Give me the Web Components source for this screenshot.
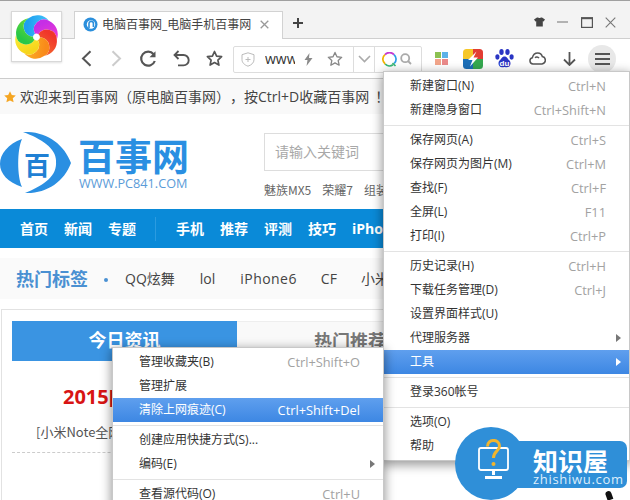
<!DOCTYPE html>
<html lang="zh-CN"><head><meta charset="utf-8"><title>百事网</title>
<style>
html,body{margin:0;padding:0;background:#fff}
body{width:630px;height:500px;overflow:hidden;position:relative;font-family:"Open Sans","Noto Sans CJK SC",sans-serif;color:#333;text-spacing-trim:space-all}
context-menu.main{position:absolute;left:383px;top:71px;width:247px;z-index:5}
context-menu.sub{position:absolute;left:112px;top:347px;width:272px;z-index:6}
app-logo{position:absolute;left:11px;top:11px;z-index:3}
water-mark{position:absolute;left:455px;top:427px;z-index:8}
</style></head><body>
<tab-strip></tab-strip>
<tool-bar></tool-bar>
<book-marks></book-marks>
<site-header></site-header>
<site-nav></site-nav>
<hot-tags></hot-tags>
<news-panel></news-panel>
<app-logo></app-logo>
<context-menu class="main">
<menu-item label="新建窗口(N)" key="Ctrl+N"></menu-item>
<menu-item label="新建隐身窗口" key="Ctrl+Shift+N"></menu-item>
<menu-sep></menu-sep>
<menu-item label="保存网页(A)" key="Ctrl+S"></menu-item>
<menu-item label="保存网页为图片(M)" key="Ctrl+M"></menu-item>
<menu-item label="查找(F)" key="Ctrl+F"></menu-item>
<menu-item label="全屏(L)" key="F11"></menu-item>
<menu-item label="打印(I)" key="Ctrl+P"></menu-item>
<menu-sep></menu-sep>
<menu-item label="历史记录(H)" key="Ctrl+H"></menu-item>
<menu-item label="下载任务管理(D)" key="Ctrl+J"></menu-item>
<menu-item label="设置界面样式(U)"></menu-item>
<menu-item label="代理服务器" arrow></menu-item>
<menu-item label="工具" arrow active></menu-item>
<menu-sep></menu-sep>
<menu-item label="登录360帐号"></menu-item>
<menu-sep></menu-sep>
<menu-item label="选项(O)"></menu-item>
<menu-item label="帮助"></menu-item>
</context-menu>
<context-menu class="sub">
<menu-item label="管理收藏夹(B)" key="Ctrl+Shift+O"></menu-item>
<menu-item label="管理扩展"></menu-item>
<menu-item label="清除上网痕迹(C)" key="Ctrl+Shift+Del" active></menu-item>
<menu-sep></menu-sep>
<menu-item label="创建应用快捷方式(S)..."></menu-item>
<menu-item label="编码(E)" arrow></menu-item>
<menu-sep></menu-sep>
<menu-item label="查看源代码(O)" key="Ctrl+U"></menu-item>
</context-menu>
<water-mark></water-mark>
<script>
function def(name,html){
  customElements.define(name,class extends HTMLElement{
    constructor(){super();this.attachShadow({mode:'open'});}
    connectedCallback(){this.shadowRoot.innerHTML=typeof html==='function'?html(this):html;}
  });
}
def('tab-strip',`<style>
:host{display:flex;height:38px;box-sizing:border-box;background:#f3f3f3;border-top:1px solid #a0a0a0;padding:10px 0 0 74px;position:relative;align-items:flex-start}
:host::after{content:"";position:absolute;left:0;right:0;bottom:-1px;height:1px;background:#cfcfcf}
.tab{width:209px;height:28px;box-sizing:border-box;background:#fff;border:1px solid #d2d2d2;border-bottom:0;display:flex;align-items:center;padding:0 0 2px 8px;position:relative;z-index:1;font-size:12px;color:#444;line-height:16px}
.t{margin-left:4px;white-space:nowrap;width:150px}
.x{margin-left:8px;display:flex}
.plus{margin:6px 0 0 9px;display:flex}
.ctl{margin-left:auto;display:flex;align-items:center;padding:0 14px 0 0;height:22px}
</style>
<div class="tab">
<svg width="15" height="15" viewBox="0 0 15 15"><circle cx="7.5" cy="7.5" r="7" fill="#2b8fdc"/><circle cx="8" cy="7.5" r="4.2" fill="#fff"/><path d="M6 11V6.6a2.2 2.2 0 0 1 4.4 0V10" fill="none" stroke="#2b8fdc" stroke-width="1.6"/></svg>
<span class="t">电脑百事网_电脑手机百事网</span>
<span class="x"><svg width="9" height="9" viewBox="0 0 9 9"><path d="M.7.7l7.6 7.6M8.300.7L.7 8.300" stroke="#999" stroke-width="1.300"/></svg></span>
</div>
<span class="plus"><svg width="12" height="12" viewBox="0 0 12 12"><path d="M6 1v10M1 6h10" stroke="#444" stroke-width="2"/></svg></span>
<span class="ctl">
<svg width="11" height="10" viewBox="0 0 11 10" style="margin-right:12px"><path d="M3 .5h1.300c.3.8 2.100.8 2.400 0H8L11 2.500 9.600 4.600 8.800 4.200V9.500H2.200V4.200L1.400 4.600 0 2.500z" fill="#444"/></svg>
<svg width="11" height="2" viewBox="0 0 11 2" style="margin-right:13px"><path d="M0 1h11" stroke="#888" stroke-width="1.200"/></svg>
<svg width="12" height="11" viewBox="0 0 12 11" style="margin-right:12px"><rect x=".6" y="1" width="10.800" height="9.400" fill="none" stroke="#555" stroke-width="1.200"/><path d="M0 1.200h12" stroke="#555" stroke-width="2"/></svg>
<svg width="11" height="11" viewBox="0 0 11 11"><path d="M.7.7l9.600 9.600M10.300.7L.7 10.300" stroke="#777" stroke-width="1.100"/></svg>
</span>`);

def('tool-bar',`<style>
:host{display:flex;height:40px;box-sizing:border-box;background:#fff;border-bottom:1px solid #ccc;margin-top:1px;padding-left:71px;align-items:center}
.s{display:flex;align-items:center;justify-content:center;flex:none;height:30px}
.addr{width:189px;height:27px;box-sizing:border-box;border:1px solid #ddd;border-radius:2px;margin:1px 0 0 2px;display:flex;align-items:center;font-size:14px;color:#333;flex:none}
.www{width:30px;margin-left:3px;overflow:hidden;white-space:nowrap;line-height:20px;flex:none}
.d{width:1px;height:25px;background:#ddd;flex:none}
.h{width:28px;height:28px;border-radius:50%;background:#e8e8e8}
</style>
<span class="s" style="width:30px"><svg width="11" height="17" viewBox="0 0 11 17"><path d="M9.500 1.200L2 8.500l7.500 7.300" fill="none" stroke="#555" stroke-width="2"/></svg></span>
<span class="s" style="width:30px"><svg width="11" height="17" viewBox="0 0 11 17"><path d="M1.500 1.200L9 8.500l-7.500 7.300" fill="none" stroke="#ccc" stroke-width="2"/></svg></span>
<span class="s" style="width:34px"><svg width="18" height="18" viewBox="0 0 18 18"><path d="M14.600 4.200A7 7 0 1 0 15.800 11" fill="none" stroke="#555" stroke-width="2.200"/><path d="M16.500 1.200V7.200H10.500z" fill="#555"/></svg></span>
<span class="s" style="width:32px"><svg width="17" height="17" viewBox="0 0 17 17"><path d="M5.500 1L1.500 5l4 4" fill="none" stroke="#555" stroke-width="1.800"/><path d="M2 5h8.500a5 5 0 0 1 0 10.400H5" fill="none" stroke="#555" stroke-width="1.900"/></svg></span>
<span class="s" style="width:34px"><svg width="17" height="17" viewBox="0 0 17 17"><path d="M8.500 1.500l2.100 4.600 5 .6-3.700 3.400 1 5-4.400-2.500-4.400 2.500 1-5L1.400 6.700l5-.6z" fill="none" stroke="#555" stroke-width="1.700" stroke-linejoin="round"/></svg></span>
<div class="addr">
<span class="s" style="width:28px"><svg width="14" height="15" viewBox="0 0 14 15"><path d="M7 .8l6 1.900v5c0 3-2.500 5.300-6 6.500C3.500 13 1 10.700 1 7.700v-5z" fill="none" stroke="#bbb" stroke-width="1"/><path d="M7 5v5M4.500 7.500h5" stroke="#bbb" stroke-width="1"/></svg></span>
<span class="www">www.pc841.com</span>
<span class="s" style="width:26px"><svg width="9" height="13" viewBox="0 0 9 13"><path d="M5.500 0L.5 7h3L2.500 13l6-8H5z" fill="#8a8a8a"/></svg></span>
<span class="s" style="width:28px"><svg width="16" height="16" viewBox="0 0 17 17"><path d="M8.500 1.500l2.100 4.600 5 .6-3.700 3.400 1 5-4.400-2.500-4.400 2.500 1-5L1.400 6.700l5-.6z" fill="none" stroke="#888" stroke-width="1.400" stroke-linejoin="round"/></svg></span>
<span class="d" style="margin-left:4px"></span>
<span class="s" style="width:20px"><svg width="13" height="8" viewBox="0 0 13 8"><path d="M1 1l5.500 5.500L12 1" fill="none" stroke="#aaa" stroke-width="1.600"/></svg></span>
<span class="d"></span>
<span class="s" style="width:27px;margin-left:1px"><svg width="15" height="15" viewBox="0 0 15 15" fill="none" stroke-width="1.700"><path d="M3 2.600A6 6 0 0 1 12 2.600" stroke="#c43ad0"/><path d="M3 2.600A6 6 0 0 0 3.200 12" stroke="#f0b400"/><path d="M3.200 12A6 6 0 0 0 11 12.800" stroke="#3cb878"/><path d="M12 2.600A6 6 0 0 1 12.200 11.500" stroke="#2b9ce8"/><path d="M10.500 11l3 3" stroke="#3cb878"/></svg></span>
<span class="s" style="width:12px;margin-left:-3px"><svg width="12" height="12" viewBox="0 0 12 12" fill="none" stroke="#aaa" stroke-width="1.800"><circle cx="5.200" cy="5.200" r="4"/><path d="M8 8l3 3"/></svg></span>
</div>
<span class="s" style="width:39px"><svg width="13" height="13" viewBox="0 0 13 13"><rect width="6" height="6" fill="#8cc152"/><rect x="7" width="6" height="6" fill="#5db2e8"/><rect y="7" width="6" height="6" fill="#f2a58a"/><rect x="7" y="7" width="6" height="6" fill="#ea8a8a"/></svg></span>
<span class="s" style="width:23px"><svg width="20" height="20" viewBox="0 0 20 20"><defs><clipPath id="q"><rect width="20" height="20" rx="3.500"/></clipPath></defs><g clip-path="url(#q)"><rect width="10" height="10" fill="#f6c728"/><rect x="10" width="10" height="10" fill="#e23d32"/><rect y="10" width="10" height="10" fill="#1d6fb8"/><rect x="10" y="10" width="10" height="10" fill="#35a84f"/></g><path d="M13.500 2.500L5 11h4.500L7 17.500l8-9h-4.500z" fill="#fff"/></svg></span>
<span class="s" style="width:40px"><svg width="19" height="20" viewBox="0 0 19 20"><ellipse cx="2.400" cy="8" rx="2.100" ry="2.700" fill="#2a35c4"/><ellipse cx="6.500" cy="3" rx="2.200" ry="2.900" fill="#2a35c4"/><ellipse cx="12.500" cy="3" rx="2.200" ry="2.900" fill="#2a35c4"/><ellipse cx="16.600" cy="8" rx="2.100" ry="2.700" fill="#2a35c4"/><path d="M9.500 7.500c2.500 0 3 2.500 5 4 2 1.800 1 6.800-2.500 6.800-1 0-1.500-.3-2.500-.3s-1.500.3-2.500.3C3.500 18.300 2.500 13.300 4.500 11.500c2-1.500 2.500-4 5-4z" fill="#2a35c4"/><text x="9.500" y="16.600" text-anchor="middle" font-size="8" font-weight="700" fill="#fff" font-family="Liberation Sans,sans-serif">du</text></svg></span>
<span class="s" style="width:26px"><svg width="17" height="13" viewBox="0 0 17 13"><path d="M4 12a3.200 3.200 0 0 1-.6-6.300C4 3 6.300 1 8.800 1c2.200 0 3.900 1.400 4.500 3.500A3.800 3.800 0 0 1 13 12zM6 5.700c1-1 3-.9 4 .4" fill="none" stroke="#555" stroke-width="1.500"/></svg></span>
<span class="s" style="width:38px"><svg width="13" height="14" viewBox="0 0 13 14"><path d="M6.500 0v12.500M1 7.500l5.500 5.500L12 7.500" fill="none" stroke="#555" stroke-width="1.800"/></svg></span>
<span class="s h"><svg width="15" height="12" viewBox="0 0 15 12"><path d="M0 1h15M0 6h15M0 11h15" stroke="#555" stroke-width="2"/></svg></span>`);

def('book-marks',`<style>
:host{display:flex;height:35px;box-sizing:border-box;background:#f9f9f9;align-items:center;padding:0 0 0 4px;font-size:14px;color:#444;white-space:nowrap;line-height:20px;overflow:hidden}
span{margin-left:4px}
em{font-style:normal;margin-left:6px}
</style><svg width="12" height="12" viewBox="0 0 12 12"><path d="M6 .3l1.800 3.700 4 .5-3 2.800.8 4L6 9.400 2.400 11.300l.8-4-3-2.800 4-.5z" fill="#f5a623"/></svg><span>欢迎来到百事网（原电脑百事网），按Ctrl+D收藏百事网<em>！</em></span>`);

def('site-header',`<style>
:host{display:flex;height:95px;box-sizing:border-box;padding-top:18px;background:#fff;overflow:hidden}
.brand{margin:5px 0 0 6px;width:110px;flex:none}
.cn{font:700 37px/36px "Noto Sans CJK SC",sans-serif;color:#2a8fe2;height:36px;white-space:nowrap;width:110px}
.en{font-size:12.700px;line-height:16px;color:#5a9bd8;margin:2px 0 0 1px;white-space:nowrap}
.r{margin-left:76px;flex:none;width:300px;margin-top:1px}
.box{height:38px;box-sizing:border-box;border:1px solid #ddd;padding-left:10px;font-size:14px;line-height:36px;color:#a8a8a8}
.k{font:12px/16px "Noto Sans CJK SC",sans-serif;color:#666;margin-top:11px;white-space:nowrap}
.k span{margin-right:11px}
</style>
<svg width="72" height="62" viewBox="0 0 72 62" style="flex:none"><path d="M22 7C8 12 0 22 0 32C0 42 8 50 22 55C17 44 17 18 22 7z" fill="#2a8fe2"/><path d="M23 0C46-1 64 12 71 31C64 50 46 62 25 61C42 54 57 45 56 30C57 17 42 7 23 0z" fill="#2a8fe2"/><text x="37" y="43" text-anchor="middle" font-size="26" font-weight="700" fill="#1f80d4" font-family="Noto Sans CJK SC,sans-serif">百</text></svg>
<div class="brand"><div class="cn">百事网</div><div class="en">WWW.PC841.COM</div></div>
<div class="r"><div class="box">请输入关键词</div><div class="k"><span>魅族MX5</span><span>荣耀7</span><span>组装</span></div></div>`);

def('site-nav',`<style>
:host{display:flex;height:39px;background:#0a8ad8;align-items:center;color:#fff;font-weight:700;font-size:14px;line-height:20px;padding-left:20px;gap:16px;white-space:nowrap;overflow:hidden;margin-bottom:10px}
i{width:1px;height:24px;background:#2b9be0;margin:0 4px 0 3px;flex:none}
</style><span>首页</span><span>新闻</span><span>专题</span><i></i><span>手机</span><span>推荐</span><span>评测</span><span>技巧</span><span>iPhone</span>`);

def('hot-tags',`<style>
:host{display:flex;height:41px;background:#fafafa;align-items:center;padding-left:16px;gap:24px;font-size:14px;line-height:20px;color:#444;white-space:nowrap;overflow:hidden;margin-bottom:10px}
b{font-size:18px;color:#4a90d2;line-height:24px}
i{width:4px;height:4px;border-radius:50%;background:#4a90d2;margin:2px -7px 0 -8px;flex:none}
.l{margin-left:1px}.p{letter-spacing:.45px;margin-left:1px}
</style><b>热门标签</b><i></i><span>QQ炫舞</span><span class="l">lol</span><span class="p">iPhone6</span><span>CF</span><span>小米</span>`);

def('news-panel',`<style>
:host{display:block;height:191px;box-sizing:border-box;background:#fff;border-top:1px solid #e2e2e2;border-left:1px solid #e2e2e2;margin-left:1px;padding:11px 0 0 10px}
.tabs{display:flex;height:40px}
.a,.b{font-size:18px;font-weight:700;display:flex;align-items:center;justify-content:center;line-height:24px;padding-bottom:2px;box-sizing:border-box}
.a{width:225px;background:#3a94e2;color:#fff}
.b{width:226px;background:#f9f9f9;border-top:1px solid #eee;color:#777}
.h{margin:22px 0 0 51px;font-size:20px;font-weight:700;color:#d81414;line-height:28px}
.p{margin:12px 0 0 24px;font:13px/18px "Noto Sans CJK SC",sans-serif;color:#555}
.dash{margin-top:11px;border-top:1px dashed #ccc;width:380px}
</style><div class="tabs"><div class="a">今日资讯</div><div class="b">热门推荐</div></div>
<div class="h">2015[</div><div class="p">[小米Note全网</div><div class="dash"></div>`);

def('app-logo',()=>{
  const c=[['#1fa0f0','#45c4fa'],['#c62ee6','#f03bd0'],['#f0352a','#f56a2e'],['#f98a1a','#fbb324'],['#f6d51c','#f8ef3a'],['#27c748','#6fdc38']];
  const R=Math.PI/180,cx=25.5,cy=26,pt=(r,a)=>[(r*Math.cos(a*R)).toFixed(2),(r*Math.sin(a*R)).toFixed(2)];
  let s='',d='';
  c.forEach((k,i)=>{
    const a=-175+i*60;
    const p0=pt(3.5,a),q0=pt(20.5,a+62),q1=pt(20.5,a+122),p1=pt(3.5,a+60);
    d+=`<linearGradient id="g${i}" gradientUnits="userSpaceOnUse" x1="${q0[0]}" y1="${q0[1]}" x2="${q1[0]}" y2="${q1[1]}"><stop offset="0" stop-color="${k[0]}"/><stop offset="1" stop-color="${k[1]}"/></linearGradient>`;
    s+=`<path fill="url(#g${i})" d="M${p0} A10 10 0 0 1 ${q0} A15 15 0 0 1 ${q1} A10 10 0 0 0 ${p1} A3.500 3.500 0 0 0 ${p0}Z"/>`;
  });
  return `<style>:host{display:block;width:51px;height:51px;box-sizing:border-box;background:#fff;border:1px solid #d8d8d8;box-shadow:0 1px 2px rgba(0,0,0,.12)}svg{display:block}</style>
  <svg width="49" height="49" viewBox="1 1 49 49"><defs>${d}</defs><g transform="translate(${cx} ${cy})">${s}</g></svg>`;
});

def('context-menu',`<style>
:host{display:block;box-sizing:border-box;background:#fff;border:1px solid #c8c8c8;padding:2px 0;box-shadow:0 3px 10px 1px rgba(0,0,0,.4)}
</style><slot></slot>`);
def('menu-sep',`<style>:host{height:6px;display:flex;align-items:center}div{height:1px;background:#e3e3e3;width:100%}</style><div></div>`);
def('menu-item',el=>{
  const on=el.hasAttribute('active');
  return `<style>
:host{display:flex;height:24px;box-sizing:border-box;align-items:center;justify-content:space-between;padding:0 23px 0 26px;font-size:12px;line-height:16px;white-space:nowrap;position:relative;color:${on?'#fff':'#333'};${on?'background:linear-gradient(#5f9fee,#3d87e3);':''}}
.k{color:${on?'#fff':'#a2a2a2'};font-size:12.800px}
svg{position:absolute;right:8px;top:8px}
</style><span>${el.getAttribute('label')}</span>${el.hasAttribute('key')?`<span class="k">${el.getAttribute('key')}</span>`:''}${el.hasAttribute('arrow')?`<svg width="5" height="8" viewBox="0 0 5 8"><path d="M0 0l5 4-5 4z" fill="${on?'#fff':'#777'}"/></svg>`:''}`;
});
def('water-mark',`<style>
:host{display:block;width:175px;height:73px}
.c{position:absolute;left:0;top:0;width:72px;height:73px;border-radius:50%;background:#2f8fd8}
.bar{position:absolute;left:50px;top:14px;width:122px;height:47px;background:#2f8fd8;border-radius:0 7px 7px 0}
svg{position:absolute;left:20px;top:12px}
.t{position:absolute;left:78px;top:17px;font:700 25px/32px "Noto Sans CJK SC",sans-serif;color:#fff;white-space:nowrap}
.u{position:absolute;left:78px;top:44px;font-size:13px;line-height:16px;color:#dcedfb;letter-spacing:.7px;white-space:nowrap}
.pg{position:absolute;left:151px;top:64px;width:6px;height:9px;background:#111;border-radius:3px 3px 0 0;transform:rotate(-20deg)}
</style><div class="pg"></div><div class="c"></div><div class="bar"></div>
<svg width="36" height="42" viewBox="0 0 36 42"><rect x="4" y="9" width="29" height="22" rx="2" fill="none" stroke="#fff" stroke-width="1.800"/><path d="M18.500 31v5M10 38.500h17" stroke="#fff" stroke-width="3"/><path d="M12.500 7.500c0-8 12-8 12-.5 0 5.500-6 5-6 12" fill="none" stroke="#f1b52e" stroke-width="3"/><circle cx="18.500" cy="25" r="2" fill="#f1b52e"/></svg>
<div class="t">知识屋</div><div class="u">zhishiwu.com</div>`);
</script>
</body></html>
